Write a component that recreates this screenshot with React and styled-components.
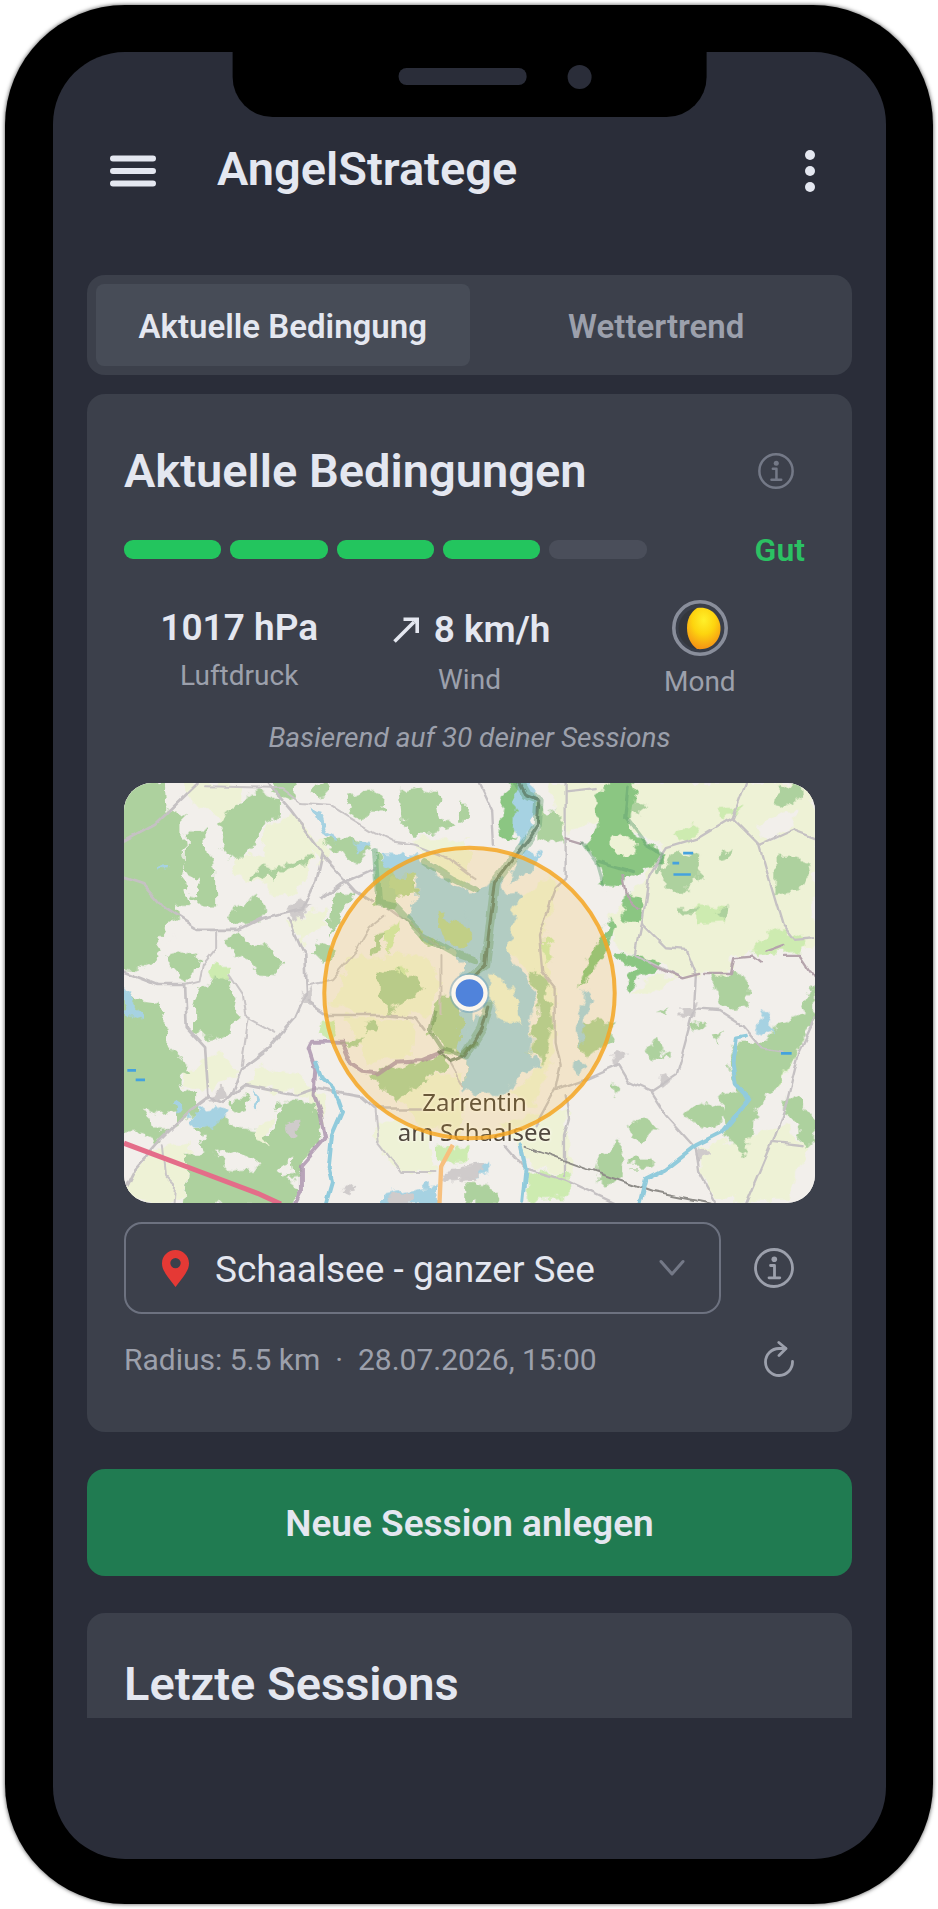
import React from "react";
import styled, { createGlobalStyle } from "styled-components";

const GlobalStyle = createGlobalStyle`
  *, *::before, *::after { box-sizing: border-box; }
  body {
    margin: 0;
    background: #ffffff;
    color: #e4e7f0;
    font-family: Roboto, "Liberation Sans", sans-serif;
  }
  button, select { font-family: inherit; color: inherit; }
  h1, h2, p, dl, dd { margin: 0; }
`;

const Page = styled.div`
  display: flex;
  min-height: 100vh;
  padding: 5px;
`;

const Phone = styled.div`
  flex: 1;
  display: flex;
  padding: 47px 47px 45px 48px;
  border-radius: 120px;
  background: #000000;
  box-shadow: 0 0 4px rgba(0, 0, 0, 0.7);
`;

const Screen = styled.div`
  position: relative;
  flex: 1;
  min-width: 0;
  padding: 76px 34px 140px;
  border-radius: 72px;
  background: #2a2d39;
`;

const Notch = styled.div`
  position: absolute;
  top: 0;
  left: 50%;
  transform: translateX(-50%);
  display: flex;
  align-items: center;
  gap: 41px;
  width: 57%;
  height: 65px;
  padding: 0 0 16px 20%;
  border-radius: 0 0 40px 40px;
  background: #000000;
`;

const Speaker = styled.span`
  width: 128px;
  height: 17px;
  border-radius: 8px;
  background: #2a2d39;
`;

const Camera = styled.span`
  width: 24px;
  height: 24px;
  border-radius: 50%;
  background: #2a2d39;
`;

const Header = styled.header`
  display: flex;
  align-items: center;
  height: 86px;
  padding: 0 36px 0 23px;
`;

const IconButton = styled.button`
  display: flex;
  flex: none;
  align-items: center;
  justify-content: center;
  padding: 0;
  border: 0;
  background: none;
  color: ${(p) => p.$color || "#e4e7f0"};
  cursor: pointer;
`;

const AppTitle = styled.h1`
  flex: 1;
  padding: 0 0 5px 61px;
  font-size: 47px;
  line-height: 56px;
  font-weight: 600;
`;

const Content = styled.main`
  display: flex;
  flex-direction: column;
  gap: 37px;
  padding-top: 61px;
`;

const Weather = styled.div`
  display: flex;
  flex-direction: column;
  gap: 19px;
`;

const Tabs = styled.div`
  display: flex;
  padding: 9px;
  border-radius: 18px;
  background: #3c404b;
`;

const Tab = styled.button`
  flex: 1;
  height: 82px;
  padding: 2px 0 0;
  border: 0;
  border-radius: 8px;
  background: ${(p) => (p.$active ? "#474c57" : "transparent")};
  color: ${(p) => (p.$active ? "#e4e7f0" : "#9ca0ac")};
  font-size: 33px;
  font-weight: 600;
  cursor: pointer;
`;

const Card = styled.section`
  padding: 49px 37px 51px;
  border-radius: 18px;
  background: #3c404b;
`;

const CutCard = styled(Card)`
  padding-top: 43px;
  padding-bottom: 6px;
  border-radius: 18px 18px 0 0;
`;

const CardHead = styled.div`
  display: flex;
  align-items: center;
  justify-content: space-between;
  padding-right: 21px;
`;

const CardTitle = styled.h2`
  font-size: 47px;
  line-height: 56px;
  font-weight: 600;
`;

const Rating = styled.div`
  display: flex;
  align-items: center;
  gap: 108px;
  height: 40px;
  margin-top: 30px;
  padding-right: 10px;
`;

const Segments = styled.div`
  display: flex;
  flex: 1;
  gap: 9px;
`;

const Segment = styled.span`
  flex: 1;
  height: 19px;
  border-radius: 9px;
  background: ${(p) => (p.$on ? "#23c55e" : "#4a4e5a")};
`;

const RatingLabel = styled.span`
  padding-top: 2px;
  color: #2bc163;
  font-size: 32px;
  line-height: 40px;
  font-weight: 600;
`;

const Stats = styled.dl`
  display: grid;
  grid-template-columns: repeat(3, 1fr);
  align-items: start;
  margin-top: 29px;
`;

const Stat = styled.div`
  display: flex;
  flex-direction: column-reverse;
  align-items: center;
  gap: 3px;
`;

const StatValue = styled.dd`
  display: flex;
  align-items: center;
  gap: 14px;
  height: ${(p) => p.$height}px;
  padding-top: ${(p) => (p.$drawing ? 0 : 4)}px;
  font-size: 37px;
  font-weight: 600;
`;

const StatName = styled.dt`
  color: #9ca0ac;
  font-size: 28px;
  line-height: 42px;
`;

const Basis = styled.p`
  margin-top: 14px;
  color: #9ca0ac;
  font-size: 28px;
  line-height: 42px;
  font-style: italic;
  text-align: center;
`;

const MapBox = styled.div`
  position: relative;
  height: 420px;
  margin-top: 24px;
  overflow: hidden;
  border-radius: 28px;
  background: #f2efeb;
`;

const MapLayer = styled.svg`
  position: absolute;
  inset: 0;
  width: 100%;
  height: 100%;
`;

const PlaceLabel = styled.p`
  position: absolute;
  top: calc(50% + 94px);
  left: 50%;
  width: 160px;
  margin-left: -75px;
  color: #50483e;
  font-family: "Noto Sans", sans-serif;
  font-size: 24px;
  line-height: 30px;
  text-align: center;
  white-space: nowrap;
  text-shadow: 0 0 3px #fffaf0, 0 0 3px #fffaf0;
`;

const LocationRow = styled.div`
  display: flex;
  align-items: center;
  gap: 33px;
  margin-top: 19px;
  padding-right: 21px;
`;

const LocationField = styled.label`
  display: flex;
  flex: 1;
  align-items: center;
  min-width: 0;
  height: 92px;
  padding: 0 34px 0 36px;
  border: 2px solid #6d7280;
  border-radius: 18px;
`;

const LocationSelect = styled.select`
  flex: 1;
  min-width: 0;
  height: 88px;
  margin-left: 26px;
  padding: 3px 0 0;
  border: 0;
  outline: 0;
  appearance: none;
  background: transparent;
  font-size: 37px;
`;

const MetaRow = styled.div`
  display: flex;
  align-items: center;
  justify-content: space-between;
  height: 44px;
  margin-top: 23px;
  padding-right: 21px;
  color: #9ca0ac;
  font-size: 30px;
  white-space: pre;
`;

const PrimaryButton = styled.button`
  height: 107px;
  padding: 2px 0 0;
  border: 0;
  border-radius: 18px;
  background: #207b51;
  font-size: 37px;
  font-weight: 600;
  cursor: pointer;
`;

function MenuIcon() {
  return (
    <svg width="46" height="32" viewBox="0 0 46 32" stroke="currentColor" strokeWidth="6" strokeLinecap="round">
      <path d="M3 3.500h40M3 16h40M3 28.500h40" />
    </svg>
  );
}

function DotsIcon() {
  return (
    <svg width="12" height="42" viewBox="0 0 12 42" fill="currentColor">
      <circle cx="6" cy="5" r="5" />
      <circle cx="6" cy="21" r="5" />
      <circle cx="6" cy="37" r="5" />
    </svg>
  );
}

function InfoIcon({ size }) {
  return (
    <svg width={size} height={size} viewBox="0 0 40 40" fill="none" stroke="currentColor" strokeWidth="2.800" strokeLinecap="round" strokeLinejoin="round">
      <circle cx="20" cy="20" r="18.500" />
      <circle cx="20.300" cy="11.300" r="2.800" fill="currentColor" stroke="none" />
      <path d="M16.500 17.500h4v12.200M15 29.800h10.800" />
    </svg>
  );
}

function PinIcon() {
  return (
    <svg width="27" height="37" viewBox="0 0 27 37" aria-hidden="true">
      <path fill="#e53935" fillRule="evenodd" d="M13.500 0C6 0 0 6 0 13.200c0 5.500 3 9.600 6 14L13.500 37 21 27.200c3-4.400 6-8.500 6-14C27 6 21 0 13.500 0Zm0 7.900a5.200 5.200 0 1 1 0 10.400 5.200 5.200 0 0 1 0-10.400Z" />
    </svg>
  );
}

const Chevron = styled.svg`
  flex: none;
  pointer-events: none;
`;

function RefreshIcon() {
  return (
    <svg width="30" height="36" viewBox="0 0 30 36" fill="none" stroke="currentColor" strokeWidth="2.800" strokeLinecap="round" strokeLinejoin="round">
      <path d="M28.500 20.500A13.500 13.500 0 1 1 15 7.500h6.500" />
      <path d="M14.800 1.500 22 7.500l-7 7" />
    </svg>
  );
}

const Arrow = styled.svg`
  margin-left: 4px;
`;

function WindArrow() {
  return (
    <Arrow width="27" height="27" viewBox="0 0 27 27" fill="none" stroke="currentColor" strokeWidth="3.600" aria-hidden="true">
      <path d="M1.500 25.500 21 6" />
      <path fill="currentColor" stroke="none" d="M10.500 1.500H26V17h-3.600V7.500L20 5.100h-9.500Z" />
    </Arrow>
  );
}

function MoonIcon() {
  return (
    <svg width="56" height="56" viewBox="0 0 56 56" role="img" aria-label="Zunehmender Mond">
      <defs>
        <radialGradient id="moon" cx="0.500" cy="0.300" r="0.750">
          <stop offset="0" stopColor="#fff02a" />
          <stop offset="0.450" stopColor="#fdd40f" />
          <stop offset="1" stopColor="#f48a16" />
        </radialGradient>
      </defs>
      <circle cx="28" cy="28" r="26.200" fill="#3a3f4a" stroke="#898e9b" strokeWidth="3.600" />
      <circle cx="27" cy="28.500" r="20.500" fill="#34373d" />
      <path fill="url(#moon)" d="M25 8C39 5.500 48.500 17 48.500 28.500S40 50.500 25 49C18.500 44 15 37 15 28S18.500 12.500 25 8Z" />
    </svg>
  );
}

const forestWest = [
  "0,0 155,24 160,105 205,120 205,190 215,270 205,320 225,390 190,390 195,425 120,490 140,550 60,585 0,580 0,0",
  "215,170 270,170 275,250 300,280 300,395 260,395 225,365 250,340 215,290",
  "390,75 430,50 500,85 500,120 455,145 430,190 380,250 345,255 310,215 330,160 310,140",
  "470,24 545,24 540,60 500,75 465,50",
  "700,60 760,38 805,60 800,110 740,130 695,95",
  "850,50 900,38 970,60 980,130 1015,160 950,180 890,180 855,130",
  "590,40 640,30 650,60 600,70",
  "400,310 440,275 480,290 520,265 580,245 575,270 500,290 485,320 450,295 410,320",
  "335,420 380,395 430,360 460,395 430,430 370,445",
  "320,495 380,475 430,515 480,520 505,565 480,595 430,590 400,560 360,540",
  "650,380 680,350 715,360 690,410 640,480",
  "590,530 610,500 660,530 620,560",
  "255,640 300,610 350,620 370,680 350,770 290,800 240,760 240,690",
  "80,670 130,680 145,740 170,760 160,815 200,850 220,890 190,905 200,940 240,960 240,1010 170,1060 130,1100 80,1070 0,1080 0,620 60,680",
  "150,530 200,520 250,550 240,600 190,610 170,570",
  "340,980 390,970 400,1000 350,1010",
  "240,1060 320,1030 380,1060 470,1070 490,990 540,970 600,990 615,1090 570,1150 550,1210 500,1215 500,1160 470,1200 360,1120 280,1140",
  "220,1130 300,1130 350,1190 460,1170 550,1240 520,1290 200,1290 215,1200",
  "790,600 850,580 870,610 910,605 925,630 880,680 850,690 820,710 790,660",
  "780,480 805,475 795,530 770,540",
  "740,750 770,735 800,760 790,775 745,770",
  "680,795 755,790 730,820 690,815",
  "620,200 700,190 770,220 720,265 660,230",
  "760,905 830,870 900,870 970,835 1000,840 990,890 940,900 900,945 845,970",
  "775,230 850,270 900,300 910,360 860,350 830,400 780,390",
  "960,400 1060,470 1050,520 1000,530 930,500 880,440",
  "950,720 980,660 1020,670 1050,740 1030,830 980,825 945,770",
  "1050,1220 1080,1220 1080,1290 1050,1290",
  "1035,90 1055,90 1050,150 1030,150",
];

const forestEast = [
  "215,90 290,120 290,190 260,205 215,190",
  "500,80 540,90 530,130 490,120",
  "930,240 1000,240 1035,300 1000,345 925,355",
  "590,270 640,230 700,255 700,310 670,345 590,345",
  "755,245 800,215 790,250 760,260",
  "940,40 1000,24 1005,60 960,100 930,80",
  "735,600 810,590 850,640 850,690 805,705 760,680",
  "1047,620 1047,720 1000,820 940,930 870,1000 860,1080 830,1140 785,1080 770,1010 765,960 810,950 790,860 820,800 900,800 930,750 1000,720",
  "960,960 990,970 1047,1040 1047,1110 1010,1110 1005,1040 955,1030",
  "650,1015 720,980 780,1010 760,1040 720,1060 660,1035",
  "400,1150 450,1095 480,1110 470,1190 430,1230 385,1230",
  "490,1150 550,1150 550,1180 490,1180",
  "540,830 570,790 605,840 560,850",
  "480,1060 530,1030 580,1060 520,1110",
  "0,1225 60,1230 100,1260 100,1290 0,1290",
  "360,740 450,745 430,800 370,850 340,820",
  "200,590 240,600 260,740 240,860 190,830 220,720",
  "110,780 160,790 200,850 130,870 100,850",
  "620,400 690,400 690,415 640,420",
  "750,410 790,400 780,440",
  "440,940 470,930 450,965",
  "575,720 605,700 605,720",
  "670,750 710,740 715,755 680,770",
  "735,775 765,770 760,795",
  "0,860 30,880 50,920 0,930",
];

const meadowWest = [
  "200,24 380,30 370,100 320,150 280,100 230,90",
  "460,150 540,120 590,200 580,300 510,375 430,330 350,290 370,250 440,240",
  "560,170 640,210 620,270 590,230",
  "27,260 110,310 60,330 27,320",
  "520,430 630,400 640,440 560,510",
  "210,880 320,830 370,900 260,950 200,930",
  "430,870 560,900 570,960 400,930",
  "30,1230 100,1130 230,1100 200,1280 27,1280",
  "780,1030 930,1060 960,1190 860,1190 790,1120",
  "880,190 1060,190 1060,330 940,260",
  "700,545 930,540 980,620 940,720 760,720 650,690",
  "680,720 830,730 900,740 890,850 760,860",
  "850,960 950,900 1040,900 1040,1090 900,1040",
  "560,930 640,960 620,1050 590,1000",
];

const meadowEast = [
  "250,24 1047,24 1047,520 930,510 800,550 780,600 640,600 550,560 450,520 430,430 520,330 600,220 420,130 300,180",
  "130,400 250,300 280,340 230,500 260,640 270,830 200,1000 130,960 230,870 240,700 200,600 130,530",
  "100,1040 300,1000 320,1200 200,1180",
  "700,1120 960,1050 1030,1120 960,1270 750,1270 700,1190",
  "560,600 640,600 560,650 500,660",
];

const brightWest = [
  "27,360 60,380 50,410 27,400",
  "300,570 350,570 330,620 280,620",
  "800,470 850,440 840,500 820,540",
  "620,740 650,730 660,790 610,780",
  "830,580 870,580 860,610 830,610",
  "970,1120 1050,1110 1050,1160 970,1170",
  "50,820 70,880 40,920 30,850",
];

const brightEast = [
  "625,170 700,150 690,190 640,200",
  "680,390 780,400 780,445 690,450",
  "920,450 960,480 1020,500 1000,530 860,540",
  "755,100 830,90 820,120 760,125",
  "190,1190 310,1200 310,1265 190,1270",
  "225,500 260,500 255,560 235,560",
  "1010,800 940,940 920,920 980,810",
];

function Shapes({ list, fill }) {
  return (
    <g fill={fill}>
      {list.map((points) => (
        <polygon key={points} points={points} />
      ))}
    </g>
  );
}

function LakeMap() {
  return (
    <MapLayer viewBox="0 0 2070 1260" preserveAspectRatio="xMidYMid slice" role="img" aria-label="Karte vom Schaalsee">
      <defs>
        <filter id="rough" x="0" y="0" width="2070" height="1260" filterUnits="userSpaceOnUse">
          <feTurbulence type="fractalNoise" baseFrequency="0.025" numOctaves="3" seed="4" result="noise" />
          <feDisplacementMap in="SourceGraphic" in2="noise" scale="50" xChannelSelector="R" yChannelSelector="G" />
        </filter>
        <filter id="bend" x="0" y="0" width="2070" height="1260" filterUnits="userSpaceOnUse">
          <feTurbulence type="fractalNoise" baseFrequency="0.016" numOctaves="2" seed="9" result="noise" />
          <feDisplacementMap in="SourceGraphic" in2="noise" scale="22" xChannelSelector="R" yChannelSelector="G" />
        </filter>
      </defs>
      <rect width="2070" height="1260" fill="#f2efeb" />
      <g filter="url(#rough)">
        <g transform="translate(-27 -24)">
          <Shapes list={meadowWest} fill="#eef2d6" />
          <Shapes list={brightWest} fill="#cdebb0" />
        </g>
        <g transform="translate(1023 -24)">
          <Shapes list={meadowEast} fill="#eef2d6" />
          <Shapes list={brightEast} fill="#cdebb0" />
          <polygon fill="#f2efeb" points="870,150 1000,110 970,170 890,195" />
        </g>
        <g transform="translate(-27 -24)">
          <Shapes list={forestWest} fill="#add19e" />
          <g fill="#f2efeb">
            <polygon points="225,330 250,310 260,365 235,360" />
            <polygon points="130,500 180,490 190,530 140,540" />
            <polygon points="490,1170 530,1160 535,1200 495,1210" />
            <polygon points="80,1000 130,1020 180,1010 180,1060 120,1060" />
          </g>
          <polygon fill="#eef2d6" points="430,1040 470,1030 450,1110 420,1090" />
        </g>
        <g transform="translate(1023 -24)">
          <Shapes list={forestEast} fill="#add19e" />
          <g fill="#8bc682">
            <polygon points="390,60 470,0 510,0 500,90 490,140 520,200 600,230 570,280 500,300 440,335 405,330 410,290 390,250 360,210 400,150" />
            <polygon points="480,350 530,370 520,440 470,430" />
            <polygon points="450,530 560,560 580,580 520,610 490,650 480,620 520,580 450,550" />
            <polygon points="400,490 440,440 450,460 420,530 380,600 340,640 360,570" />
            <polygon points="130,0 200,0 150,150 140,200 100,180 110,90" />
          </g>
          <polygon fill="#eef2d6" points="430,200 470,175 510,210 500,240 450,240" />
        </g>
        <g transform="translate(-27 -24)" fill="#a6d2e2">
          <path d="M800 235 900 240 960 300 1080 355V560L1030 560 1000 530 930 490 880 420 905 380 910 310 830 300Z" />
          <path d="M1050 540h30v320l-60-20 20-100Z" />
          <path d="M585 95 615 105 635 170 670 200 660 205 620 175Z" />
          <path d="M700 200 765 205 740 225Z" />
          <path d="M215 1040 240 1000 300 990 335 1010 310 1045 250 1055Z" />
          <path d="M170 975 190 970 205 1010 180 1015Z" />
          <path d="M0 600 40 650 80 740 40 720Z" />
          <path d="M120 275 155 275 150 290 120 285Z" />
          <path d="M410 950 430 975 430 1010 415 990Z" />
          <path d="M800 1260 960 1225 965 1290 800 1290Z" />
        </g>
        <g transform="translate(1023 -24)" fill="#a6d2e2">
          <path d="M160 0 200 0 215 100 185 190 160 210 145 160Z" />
          <path d="M80 300 120 340 160 375 135 450 130 560 200 620 205 720 190 840 240 865 160 900 130 960 0 950 0 780 60 710 20 560 0 380Z" />
          <path d="M150 270 190 220 230 235 190 290 130 330Z" />
          <path d="M355 645 375 650 360 760 350 820 335 800 340 710Z" />
          <path d="M330 850 355 860 345 900 325 900Z" />
          <path d="M870 750 885 700 920 740 920 780 870 765Z" />
          <path d="M0 1180 70 1160 75 1190 20 1200Z" />
        </g>
        <g transform="translate(1023 -24)" fill="#eef2d6">
          <path d="M75 600 110 610 155 680 160 750 110 740 80 670Z" />
        </g>
        <g transform="translate(-27 -24)" fill="#b8d69a">
          <path d="M830 305 905 300 900 365 830 370Z" />
          <path d="M970 400 1000 440 1060 450 1060 500 1010 520 970 460Z" />
        </g>
        <g transform="translate(-27 -24)" fill="#cfcbcb">
          <path d="M520 400 555 370 585 395 540 430Z" />
          <path d="M560 650 590 630 590 680 560 680Z" />
          <path d="M510 1050 545 1035 550 1080 520 1090Z" />
          <path d="M270 960 320 940 330 975 290 980Z" />
          <path d="M980 1190 1080 1170 1080 1210 990 1220Z" />
          <path d="M820 1260 890 1250 890 1290 820 1290Z" />
          <path d="M670 1245 720 1230 700 1260Z" />
        </g>
        <g transform="translate(1023 -24)" fill="#cfcbcb">
          <path d="M440 840 475 820 480 850 450 870Z" />
          <path d="M580 905 610 900 605 930 575 935Z" />
          <path d="M650 700 690 690 680 725 650 725Z" />
          <path d="M690 1110 730 1140 690 1160Z" />
          <path d="M0 1170 50 1165 50 1195 0 1200Z" />
        </g>
      </g>
      <g filter="url(#bend)" fill="none" strokeLinecap="round" strokeLinejoin="round">
        <g transform="translate(-27 -24)" stroke="#c5c1c3" strokeWidth="8">
          <path d="M0 215 120 150 250 24M455 24 530 110 620 230 600 320 560 400 440 430 370 465 250 465 150 400 90 330 0 300" />
          <path d="M0 580 130 630 210 630 215 760 270 820 280 965 320 980 390 930 540 960 600 940 740 965 780 1000 920 1000" />
          <path d="M280 965 220 1010 130 1100 60 1180 30 1240M520 430 570 540 575 650 540 730 460 820 380 880 350 960" />
          <path d="M620 240 720 350 770 380M620 370 680 325 780 280M580 680 640 720 800 720 900 730 930 770" />
        </g>
        <g transform="translate(-27 -24)" stroke="#c9c5c6" strokeWidth="6">
          <path d="M300 470 300 520 260 570 250 620 210 630M340 600 380 660 390 720 480 770M400 730 380 870M270 35 500 40 560 85 640 90 770 170 830 200 900 210 1000 250 1080 310" />
          <path d="M580 625 650 610 720 530 760 460 810 420M780 1000 790 1100 860 1190 960 1190M140 1110 150 1200 180 1230 175 1290M975 540V720M820 400 980 520M1000 860 1040 930" />
        </g>
        <g transform="translate(1023 -24)" stroke="#c5c1c3" strokeWidth="7">
          <path d="M840 24 800 130 700 190 600 220 550 300 530 440 510 540 640 605M800 130 880 210 920 350 950 450 985 495 1047 490M880 210 980 165 1047 190" />
          <path d="M530 450 600 520 660 525 690 600 685 700 650 830 630 900 555 950 490 920 460 870 370 910 270 945M685 700 760 705 830 750 890 820 950 830" />
          <path d="M555 950 600 1020 690 1120 700 1190 750 1280M1047 730 1000 830 960 990 920 1100 840 1290M920 1100 1010 1110" />
          <path d="M300 24V310L270 340 220 480 230 590 270 640 270 800 285 870 270 940 210 1050M300 50 390 40M40 24 80 110 85 210M120 1110 180 1180 300 1215 450 1285M300 960 310 1030 295 1080 295 1200" />
        </g>
        <path transform="translate(1023 -24)" d="M180 1115 360 1180 560 1250 760 1290" stroke="#8f8d89" strokeWidth="6" />
        <g transform="translate(1023 -24)" stroke="#b5a4ac" strokeWidth="7">
          <path d="M300 190 350 205M470 300 480 360 520 400M560 570 650 610 700 597M715 597 795 597 805 550 860 545 885 565M900 530 955 510M960 540 1000 540 1047 610" />
        </g>
        <g transform="translate(-27 -24)" stroke="#a991ad" strokeWidth="12" opacity="0.800">
          <path d="M540 1290 560 1250 560 1170 630 1090 615 1010 595 960 600 880 580 820 590 800 680 800 710 870 740 890 790 895 840 860 920 855 980 830" />
        </g>
        <g stroke="#91cbdc" strokeWidth="12">
          <path transform="translate(-27 -24)" d="M600 860 620 910 655 940 680 1010 650 1080 640 1180 650 1220 630 1290" />
          <path transform="translate(1023 -24)" d="M520 1290 540 1210 600 1180 690 1110 770 1070 850 970 810 930 800 860 810 790 840 785M165 1110 180 1180 170 1280" />
        </g>
        <path transform="translate(-27 -24)" d="M780 230 790 385 840 395 920 480 1010 530 1080 555M930 260 1010 310 1080 345" stroke="#6fae81" strokeWidth="20" opacity="0.550" />
        <g transform="translate(1023 -24)" stroke="#5f9e72">
          <path d="M160 24 180 60 220 75 215 150 190 190 150 240 90 320 60 570 10 610M70 690 50 760 0 840" strokeWidth="28" opacity="0.400" />
          <path d="M160 24 180 60 220 75 215 150 190 190 150 240 90 320 70 470 60 570 20 610M70 690 50 760 0 840-50 860-80 830" stroke="#59755c" strokeWidth="9" opacity="0.700" />
          <path d="M490 40 480 130 540 210 590 240 570 290M400 260 500 290 M350 205 390 260 410 330" strokeWidth="10" opacity="0.450" />
        </g>
        <path transform="translate(-27 -24)" d="M960 710 945 770 980 825 1040 840 1080 800" stroke="#5a8c5a" strokeWidth="12" opacity="0.500" />
      </g>
      <g fill="none">
        <path d="M0 1080 240 1170 400 1230 470 1262" stroke="#e46d89" strokeWidth="15" />
        <path d="M985 1085 950 1150 945 1262" stroke="#f7c07e" strokeWidth="13" />
        <path d="M1675 211h30M1643 241h20M1646 275h52M1968 811h32M10 862h26M35 890h28" stroke="#45a2de" strokeWidth="8" />
      </g>
    </MapLayer>
  );
}

function RadiusOverlay() {
  return (
    <MapLayer viewBox="0 0 2070 1260" preserveAspectRatio="xMidYMid slice" role="img" aria-label="Umkreis 5.5 km">
      <circle cx="1035" cy="630" r="435" fill="#f5b020" fillOpacity="0.160" stroke="#f5a623" strokeOpacity="0.850" strokeWidth="12" />
      <circle cx="1035" cy="630" r="60" fill="#6c9fc0" fillOpacity="0.500" />
      <circle cx="1035" cy="630" r="48" fill="#5083db" stroke="#fcf6ec" strokeWidth="13" />
    </MapLayer>
  );
}

export default function App() {
  return (
    <>
      <GlobalStyle />
      <Page>
        <Phone>
          <Screen>
            <Notch>
              <Speaker />
              <Camera />
            </Notch>
            <Header>
              <IconButton aria-label="Menü">
                <MenuIcon />
              </IconButton>
              <AppTitle>AngelStratege</AppTitle>
              <IconButton aria-label="Weitere Optionen">
                <DotsIcon />
              </IconButton>
            </Header>
            <Content>
              <Weather>
                <Tabs role="tablist">
                  <Tab role="tab" aria-selected="true" $active>Aktuelle Bedingung</Tab>
                  <Tab role="tab" aria-selected="false">Wettertrend</Tab>
                </Tabs>
                <Card>
                  <CardHead>
                    <CardTitle>Aktuelle Bedingungen</CardTitle>
                    <IconButton aria-label="Info zu den Bedingungen" $color="#747987">
                      <InfoIcon size={36} />
                    </IconButton>
                  </CardHead>
                  <Rating>
                    <Segments>
                      {[1, 2, 3, 4, 5].map((n) => (
                        <Segment key={n} $on={n <= 4} />
                      ))}
                    </Segments>
                    <RatingLabel>Gut</RatingLabel>
                  </Rating>
                  <Stats>
                    <Stat>
                      <StatName>Luftdruck</StatName>
                      <StatValue $height={54}>1017 hPa</StatValue>
                    </Stat>
                    <Stat>
                      <StatName>Wind</StatName>
                      <StatValue $height={58}>
                        <WindArrow />
                        8 km/h
                      </StatValue>
                    </Stat>
                    <Stat>
                      <StatName>Mond</StatName>
                      <StatValue $height={60} $drawing>
                        <MoonIcon />
                      </StatValue>
                    </Stat>
                  </Stats>
                  <Basis>Basierend auf 30 deiner Sessions</Basis>
                  <MapBox>
                    <LakeMap />
                    <PlaceLabel>
                      Zarrentin
                      <br />
                      am Schaalsee
                    </PlaceLabel>
                    <RadiusOverlay />
                  </MapBox>
                  <LocationRow>
                    <LocationField>
                      <PinIcon />
                      <LocationSelect aria-label="Gewässer" defaultValue="schaalsee">
                        <option value="schaalsee">Schaalsee - ganzer See</option>
                      </LocationSelect>
                      <Chevron width="26" height="18" viewBox="0 0 26 18" fill="none" stroke="#747987" strokeWidth="3" strokeLinecap="round" strokeLinejoin="round" aria-hidden="true">
                        <path d="M2 2.500 13 15 24 2.500" />
                      </Chevron>
                    </LocationField>
                    <IconButton aria-label="Info zum Gewässer" $color="#9ca0ac">
                      <InfoIcon size={40} />
                    </IconButton>
                  </LocationRow>
                  <MetaRow>
                    <span>{"Radius: 5.5 km  ·  28.07.2026, 15:00"}</span>
                    <IconButton aria-label="Aktualisieren" $color="#9ca0ac">
                      <RefreshIcon />
                    </IconButton>
                  </MetaRow>
                </Card>
              </Weather>
              <PrimaryButton>Neue Session anlegen</PrimaryButton>
              <CutCard>
                <CardTitle>Letzte Sessions</CardTitle>
              </CutCard>
            </Content>
          </Screen>
        </Phone>
      </Page>
    </>
  );
}
